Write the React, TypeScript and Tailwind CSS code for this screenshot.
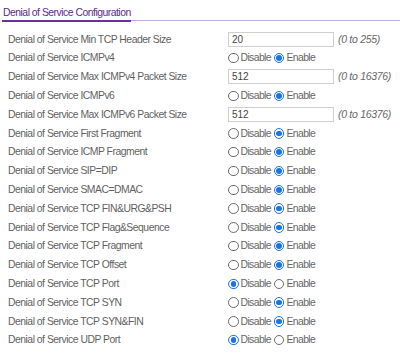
import React from "react";

type Row =
  | { label: string; kind: "input"; value: string; range: string }
  | { label: string; kind: "radio"; enabled: boolean };

const rows: Row[] = [
  { label: "Denial of Service Min TCP Header Size", kind: "input", value: "20", range: "(0 to 255)" },
  { label: "Denial of Service ICMPv4", kind: "radio", enabled: true },
  { label: "Denial of Service Max ICMPv4 Packet Size", kind: "input", value: "512", range: "(0 to 16376)" },
  { label: "Denial of Service ICMPv6", kind: "radio", enabled: true },
  { label: "Denial of Service Max ICMPv6 Packet Size", kind: "input", value: "512", range: "(0 to 16376)" },
  { label: "Denial of Service First Fragment", kind: "radio", enabled: true },
  { label: "Denial of Service ICMP Fragment", kind: "radio", enabled: true },
  { label: "Denial of Service SIP=DIP", kind: "radio", enabled: true },
  { label: "Denial of Service SMAC=DMAC", kind: "radio", enabled: true },
  { label: "Denial of Service TCP FIN&URG&PSH", kind: "radio", enabled: true },
  { label: "Denial of Service TCP Flag&Sequence", kind: "radio", enabled: true },
  { label: "Denial of Service TCP Fragment", kind: "radio", enabled: true },
  { label: "Denial of Service TCP Offset", kind: "radio", enabled: true },
  { label: "Denial of Service TCP Port", kind: "radio", enabled: false },
  { label: "Denial of Service TCP SYN", kind: "radio", enabled: true },
  { label: "Denial of Service TCP SYN&FIN", kind: "radio", enabled: true },
  { label: "Denial of Service UDP Port", kind: "radio", enabled: false },
];

function Radio({ checked, className = "" }: { checked: boolean; className?: string }) {
  return checked ? (
    <span className={"w-[10.5px] h-[10.5px] rounded-full border-[1.5px] border-[#1a73e8] bg-white flex items-center justify-center shrink-0 " + className}>
      <span className="w-[5.5px] h-[5.5px] rounded-full bg-[#1a73e8]" />
    </span>
  ) : (
    <span className={"block w-[10.5px] h-[10.5px] rounded-full border border-[#6b6b6b] bg-white shrink-0 " + className} />
  );
}

export default function App() {
  return (
    <div className="w-[400px] h-[361px] bg-white overflow-hidden" style={{ fontFamily: '"Liberation Sans", Arial, sans-serif' }}>
      <div className="pt-[6px]">
        <div className="pl-[3px] text-[10.4px] leading-[13px] text-[#5b2a8c] tracking-[-0.5px]">Denial of Service Configuration</div>
        <div className="mt-[1px] flex h-[2px]">
          <div className="ml-[2px] w-[129px] bg-[#6b2fa3]" />
          <div className="flex-1 h-[1px] bg-[#c9addf]" />
        </div>
      </div>
      <div className="pt-[8px]">
        {rows.map((r, i) => (
          <div key={i} className="flex items-center h-[18.8px] text-[10.4px] text-[#5f5f5f]">
            <div className="w-[228px] pl-[8px] whitespace-nowrap tracking-[-0.5px]">{r.label}</div>
            {r.kind === "input" ? (
              <div className="flex items-center">
                <div className="w-[106px] h-[15px] border border-[#cfcfcf] text-[10px] leading-[13px] pl-[3px] text-[#444]">{r.value}</div>
                <span className="ml-[4px] italic text-[10.5px] text-[#666] tracking-[-0.3px]">{r.range}</span>
              </div>
            ) : (
              <div className="flex items-center text-[#666] tracking-[-0.6px]">
                <Radio checked={!r.enabled} />
                <span className="ml-[2px]">Disable</span>
                <Radio checked={r.enabled} className="ml-[3px]" />
                <span className="ml-[2px]">Enable</span>
              </div>
            )}
          </div>
        ))}
      </div>
    </div>
  );
}
